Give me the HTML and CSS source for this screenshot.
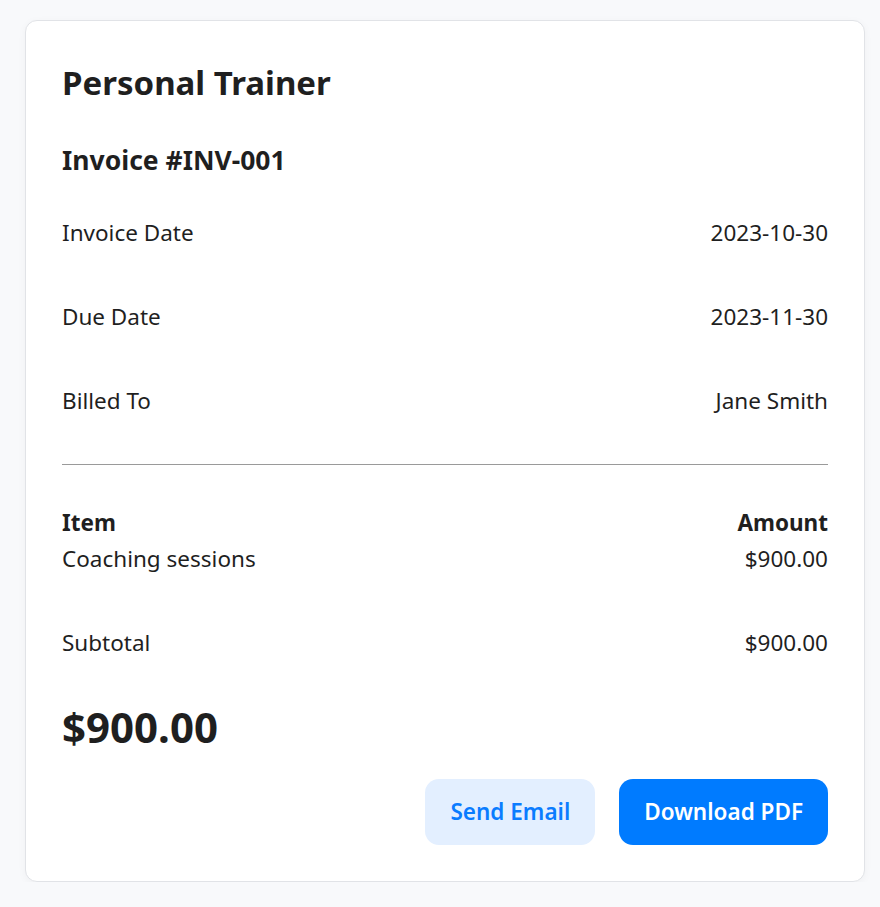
FILE: index.html
```html
<!DOCTYPE html>
<html lang="en">
<head>
<meta charset="utf-8">
<title>Invoice</title>
<link rel="stylesheet" href="styles.css">
</head>
<body>
<div class="page">
  <div class="card">
    <h1 class="title">Personal Trainer</h1>
    <h2 class="invoice-no">Invoice #INV-001</h2>
    <div class="meta">
      <div class="row"><span>Invoice Date</span><span>2023-10-30</span></div>
      <div class="row"><span>Due Date</span><span>2023-11-30</span></div>
      <div class="row"><span>Billed To</span><span>Jane Smith</span></div>
    </div>
    <hr class="divider">
    <div class="items">
      <div class="head"><span>Item</span><span>Amount</span></div>
      <div class="row item"><span>Coaching sessions</span><span>$900.00</span></div>
      <div class="row"><span>Subtotal</span><span>$900.00</span></div>
    </div>
    <div class="total">$900.00</div>
    <div class="actions">
      <button class="btn btn-light">Send Email</button>
      <button class="btn btn-primary">Download PDF</button>
    </div>
  </div>
</div>
</body>
</html>
```

FILE: styles.css
```css
html, body {
  margin: 0;
  padding: 0;
  background: #f8f9fb;
}
body {
  font-family: "Noto Sans", "Open Sans", sans-serif;
  color: #1f1f1f;
  font-size: 22.5px;
}
.page {
  padding: 20px 0 0 25px;
}
.card {
  box-sizing: border-box;
  width: 840px;
  background: #ffffff;
  border: 1px solid #e1e3e7;
  border-radius: 12px;
  box-shadow: 0 2px 8px rgba(0, 0, 0, 0.04);
  padding: 36px 36px 36px;
}
.title {
  margin: 0;
  font-size: 33px;
  font-weight: 700;
  line-height: 52px;
}
.invoice-no {
  margin: 33px 0 0;
  font-size: 26.5px;
  font-weight: 700;
  line-height: 36px;
}
.meta {
  margin-top: 13px;
}
.row, .head {
  display: flex;
  justify-content: space-between;
  line-height: 36px;
}
.row {
  padding: 24px 0;
}
.divider {
  border: none;
  border-top: 1px solid #9a9a9a;
  margin: 21px 0 0;
}
.items {
  margin-top: 40px;
}
.head {
  font-weight: 700;
}
.row.item {
  padding-top: 0;
}
.total {
  margin-top: 18px;
  font-size: 42px;
  font-weight: 700;
  line-height: 48px;
}
.actions {
  margin-top: 28px;
  display: flex;
  justify-content: flex-end;
  gap: 24px;
}
.btn {
  font-family: inherit;
  font-size: 22.5px;
  font-weight: 600;
  line-height: 34px;
  padding: 16px 25px;
  border: none;
  border-radius: 14px;
  cursor: pointer;
}
.btn-light {
  background: #e3efff;
  color: #0a7cff;
}
.btn-primary {
  background: #007bff;
  color: #ffffff;
}
```
